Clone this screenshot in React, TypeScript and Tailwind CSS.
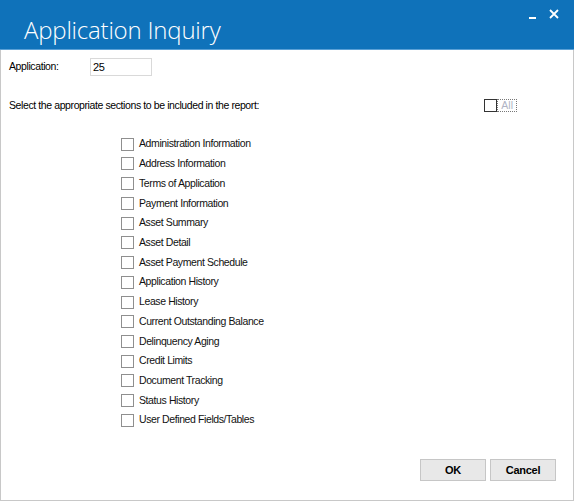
import React, { useState } from 'react';

const sections = [
  'Administration Information',
  'Address Information',
  'Terms of Application',
  'Payment Information',
  'Asset Summary',
  'Asset Detail',
  'Asset Payment Schedule',
  'Application History',
  'Lease History',
  'Current Outstanding Balance',
  'Delinquency Aging',
  'Credit Limits',
  'Document Tracking',
  'Status History',
  'User Defined Fields/Tables',
];

const Box: React.FC<{ checked: boolean; dark?: boolean }> = ({ checked, dark }) => (
  <span
    className={`w-[13px] h-[13px] shrink-0 border bg-white flex items-center justify-center ${
      dark ? 'border-[#333333]' : 'border-[#8f8f8f]'
    }`}
  >
    {checked && (
      <svg width="9" height="9" viewBox="0 0 9 9">
        <path d="M1 4.5 L3.5 7 L8 1.5" stroke="#333" strokeWidth="1.5" fill="none" />
      </svg>
    )}
  </span>
);

const App: React.FC = () => {
  const [application, setApplication] = useState('25');
  const [checked, setChecked] = useState<boolean[]>(sections.map(() => false));
  const allChecked = checked.every(Boolean);

  const toggle = (i: number) => setChecked(checked.map((c, j) => (j === i ? !c : c)));

  return (
    <div className="w-[574px] h-[501px] bg-white flex flex-col border-x border-b border-[#c8c8c8] font-['Liberation_Sans',Arial,sans-serif] text-[10.5px] tracking-[-0.4px] text-black">
      <div className="h-[50px] shrink-0 bg-[#0f72ba] border-b border-[#5aa0d6] flex items-start justify-between -mx-px tracking-normal">
        <h1 className="pl-[24px] pt-[15px] text-[24px] leading-[30px] font-light text-white font-['Open_Sans',sans-serif] tracking-[-0.2px]">
          Application Inquiry
        </h1>
        <div className="flex items-start text-white">
          <button className="w-[22px] h-[28px] flex items-center justify-center" aria-label="Minimize">
            <span className="block w-[7px] h-[2px] bg-white mt-[7px]" />
          </button>
          <button className="w-[22px] h-[28px] flex items-center justify-center mr-[9px]" aria-label="Close">
            <svg width="10" height="10" viewBox="0 0 10 10">
              <path d="M1 1 L9 9 M9 1 L1 9" stroke="white" strokeWidth="1.8" />
            </svg>
          </button>
        </div>
      </div>

      <div className="flex items-center pl-[8px] pt-[8px]">
        <span className="w-[81px]">Application:</span>
        <input
          value={application}
          onChange={(e) => setApplication(e.target.value)}
          className="w-[62px] h-[18px] border border-[#d9d9d9] px-[2px] text-[11px] outline-none"
        />
      </div>

      <div className="flex items-center justify-between pl-[8px] pr-[56px] pt-[22px]">
        <span>Select the appropriate sections to be included in the report:</span>
        <label
          className="flex items-center cursor-pointer"
          onClick={() => setChecked(sections.map(() => !allChecked))}
        >
          <Box checked={allChecked} dark />
          <span className="border border-dotted border-[#777] px-[3px] leading-[11px] text-[#b0b4c4] tracking-normal">All</span>
        </label>
      </div>

      <div className="flex flex-col pl-[120px] pt-[24px] gap-[6.73px]">
        {sections.map((s, i) => (
          <label key={s} className="flex items-center gap-[5px] h-[13px] cursor-pointer" onClick={() => toggle(i)}>
            <Box checked={checked[i]} />
            <span className="text-[#111]">{s}</span>
          </label>
        ))}
      </div>

      <div className="flex justify-end gap-[4px] pr-[17px] mt-auto mb-[19px]">
        <button className="w-[66px] h-[22px] bg-[#e8e8e8] border border-[#c6c6c6] font-bold text-[11px] tracking-[-0.3px]">OK</button>
        <button className="w-[66px] h-[22px] bg-[#e8e8e8] border border-[#c6c6c6] font-bold text-[11px] tracking-[-0.3px]">Cancel</button>
      </div>
    </div>
  );
};

export default App;
